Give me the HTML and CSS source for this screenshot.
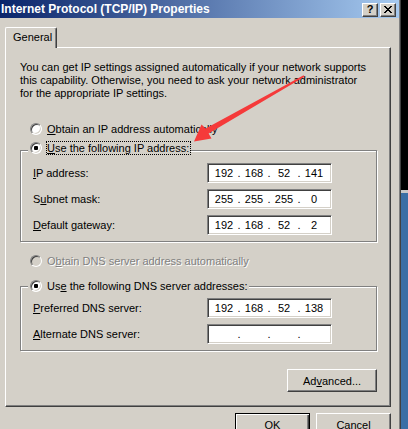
FILE: index.html
```html
<!DOCTYPE html>
<html>
<head>
<meta charset="utf-8">
<title>Internet Protocol (TCP/IP) Properties</title>
<link rel="stylesheet" href="styles.css">
</head>
<body>
<div class="window">
  <div class="titlebar">
    <span class="title">Internet Protocol (TCP/IP) Properties</span>
    <div class="caption-btns">
      <span class="cbtn help">?</span>
      <span class="cbtn close"><svg width="8" height="7" viewBox="0 0 8 7" shape-rendering="crispEdges"><path d="M0 0h2v1h-2z M6 0h2v1h-2z M1 1h2v1h-2z M5 1h2v1h-2z M2 2h4v1h-4z M3 3h2v1h-2z M2 4h4v1h-4z M1 5h2v1h-2z M5 5h2v1h-2z M0 6h2v1h-2z M6 6h2v1h-2z"/></svg></span>
    </div>
  </div>
  <div class="client">
    <div class="tabs"><div class="tab">General</div></div>
    <div class="sheet">
      <p class="intro">You can get IP settings assigned automatically if your network supports<br>this capability. Otherwise, you need to ask your network administrator<br>for the appropriate IP settings.</p>

      <div class="radio-row r-auto"><span class="radio"></span><span class="rlabel"><u>O</u>btain an IP address automatically</span></div>

      <div class="group g-ip">
        <div class="legend"><span class="radio on"></span><span class="rlabel focus"><u>U</u>se the following IP address:</span></div>
        <div class="fields">
          <div class="field"><span class="flabel"><u>I</u>P address:</span>
            <div class="ipbox"><span class="oct">192</span><span class="dot">.</span><span class="oct">168</span><span class="dot">.</span><span class="oct">52</span><span class="dot">.</span><span class="oct">141</span></div></div>
          <div class="field"><span class="flabel">S<u>u</u>bnet mask:</span>
            <div class="ipbox"><span class="oct">255</span><span class="dot">.</span><span class="oct">255</span><span class="dot">.</span><span class="oct">255</span><span class="dot">.</span><span class="oct">0</span></div></div>
          <div class="field"><span class="flabel"><u>D</u>efault gateway:</span>
            <div class="ipbox"><span class="oct">192</span><span class="dot">.</span><span class="oct">168</span><span class="dot">.</span><span class="oct">52</span><span class="dot">.</span><span class="oct">2</span></div></div>
        </div>
      </div>

      <div class="radio-row r-dns-auto disabled"><span class="radio off"></span><span class="rlabel">O<u>b</u>tain DNS server address automatically</span></div>

      <div class="group g-dns">
        <div class="legend"><span class="radio on"></span><span class="rlabel">Us<u>e</u> the following DNS server addresses:</span></div>
        <div class="fields">
          <div class="field"><span class="flabel"><u>P</u>referred DNS server:</span>
            <div class="ipbox"><span class="oct">192</span><span class="dot">.</span><span class="oct">168</span><span class="dot">.</span><span class="oct">52</span><span class="dot">.</span><span class="oct">138</span></div></div>
          <div class="field"><span class="flabel"><u>A</u>lternate DNS server:</span>
            <div class="ipbox"><span class="oct"></span><span class="dot">.</span><span class="oct"></span><span class="dot">.</span><span class="oct"></span><span class="dot">.</span><span class="oct"></span></div></div>
        </div>
      </div>

      <div class="adv-row"><button class="btn adv">Ad<u>v</u>anced...</button></div>
    </div>
    <div class="footer">
      <button class="btn default">OK</button>
      <button class="btn">Cancel</button>
    </div>
  </div>
</div>
<svg class="arrow" width="408" height="429" viewBox="0 0 408 429">
  <polygon points="304.4,76.7 208.6,133.5 211.5,138.5 194,141.5 201.5,124.5 205.6,128.5 303.6,75.3" fill="#f53a3a"/>
</svg>
</body>
</html>
```
FILE: styles.css
```css
* { box-sizing: border-box; }
html, body { margin: 0; padding: 0; }
body {
  width: 408px;
  height: 429px;
  overflow: hidden;
  position: relative;
  background: linear-gradient(to bottom, #000 0, #000 190px, #c8c8c8 190px, #c8c8c8 193px, #3a6ea5 193px);
  font-family: "Liberation Sans", Arial, sans-serif;
  font-size: 11px;
  color: #000;
}
u { text-decoration: underline; text-underline-offset: 1px; }

.window {
  width: 399px;
  height: 429px;
  background: #d4d0c8;
  box-shadow: 1px 0 0 #808080, 2px 0 0 #404040;
}

.titlebar {
  height: 18px;
  display: flex;
  align-items: center;
  padding: 0 3px 0 1px;
  background: linear-gradient(to right, #0a246a, #a6caf0);
}
.title {
  color: #fff;
  font-weight: bold;
  font-size: 12px;
  white-space: nowrap;
}
.caption-btns {
  margin-left: auto;
  display: flex;
  gap: 2px;
  margin-top: 1px;
}
.cbtn {
  width: 16px;
  height: 14px;
  background: #d4d0c8;
  border: 1px solid;
  border-color: #fff #404040 #404040 #fff;
  box-shadow: inset -1px -1px 0 #808080;
  display: flex;
  align-items: center;
  justify-content: center;
  font-weight: bold;
  font-size: 11px;
  line-height: 1;
}
.cbtn svg { display: block; }

.client {
  padding: 9px 8px 0 5px;
}
.tabs {
  height: 20px;
  display: flex;
}
.tab {
  position: relative;
  z-index: 1;
  width: 52px;
  height: 21px;
  margin-bottom: -1px;
  background: #d4d0c8;
  border-top: 1px solid #fff;
  border-left: 1px solid #fff;
  border-right: 1px solid #404040;
  box-shadow: inset -1px 0 0 #808080;
  border-radius: 2px 2px 0 0;
  padding: 3px 0 0 7px;
  line-height: 13px;
}

.sheet {
  width: 386px;
  height: 360px;
  border: 1px solid;
  border-color: #fff #404040 #404040 #fff;
  box-shadow: inset -1px -1px 0 #808080;
  padding-top: 13px;
}

.intro {
  margin: 0;
  padding-left: 14px;
  line-height: 13px;
  white-space: nowrap;
}

.radio-row {
  display: flex;
  align-items: center;
  height: 14px;
  gap: 5px;
  padding-left: 24px;
}
.r-auto { margin-top: 22px; }
.r-dns-auto { margin-top: 12px; }
.disabled .rlabel { color: #808080; text-shadow: 1px 1px 0 #fff; }

.radio {
  flex: none;
  width: 12px;
  height: 12px;
  border-radius: 50%;
  border: 1px solid;
  border-color: #808080 #fff #fff #808080;
  box-shadow: inset 1px 1px 0 #404040, inset -1px -1px 0 #d4d0c8;
  background: #fff;
  display: flex;
  align-items: center;
  justify-content: center;
}
.radio.off { background: #d4d0c8; }
.radio.on::after {
  content: "";
  width: 4px;
  height: 4px;
  border-radius: 1px;
  background: #000;
}
.rlabel { white-space: nowrap; line-height: 12px; }

.group {
  margin-left: 14px;
  width: 357px;
  border: 1px solid #808080;
  box-shadow: inset 1px 1px 0 #fff, 1px 1px 0 #fff;
}
.g-ip { margin-top: 14px; }
.g-dns { margin-top: 18px; }

.legend {
  display: flex;
  align-items: center;
  width: max-content;
  height: 14px;
  margin-left: 7px;
  padding: 0 1px 0 2px;
  gap: 4px;
  background: #d4d0c8;
}
.g-ip .legend { margin-top: -10px; padding-right: 0; }
.g-dns .legend { margin-top: -8px; }
.g-dns .legend .rlabel { padding-left: 1px; }
.focus {
  border: 1px dotted #000;
  height: 14px;
  padding: 0 1px 0 0;
  display: flex;
  align-items: center;
}

.fields {
  display: flex;
  flex-direction: column;
  gap: 6px;
  padding: 0 0 6px 12px;
}
.g-ip .fields { margin-top: 8px; }
.g-dns .fields { margin-top: 5px; }
.field {
  display: flex;
  align-items: center;
  height: 20px;
}
.flabel { width: 174px; white-space: nowrap; }
.ipbox {
  width: 125px;
  height: 20px;
  background: #fff;
  border: 1px solid;
  border-color: #808080 #fff #fff #808080;
  box-shadow: inset 1px 1px 0 #404040, inset -1px -1px 0 #d4d0c8;
  display: flex;
  align-items: center;
  padding-left: 3px;
}
.oct { width: 26px; text-align: center; }
.dot { width: 4px; text-align: center; }

.adv-row {
  margin-top: 18px;
  padding-left: 281px;
}
.btn {
  font-family: inherit;
  font-size: 11px;
  color: #000;
  background: #d4d0c8;
  border: 1px solid;
  border-color: #fff #404040 #404040 #fff;
  box-shadow: inset -1px -1px 0 #808080;
  border-radius: 0;
  height: 23px;
  width: 75px;
  padding: 0;
  margin: 0;
  display: block;
}
.adv { width: 90px; }
.btn.default {
  border: 1px solid #000;
  box-shadow: inset 1px 1px 0 #fff, inset -1px -1px 0 #404040, inset -2px -2px 0 #808080;
}

.footer {
  width: 386px;
  margin-top: 6px;
  display: flex;
  justify-content: flex-end;
  gap: 6px;
}

.arrow {
  position: absolute;
  left: 0;
  top: 0;
  pointer-events: none;
}
```
